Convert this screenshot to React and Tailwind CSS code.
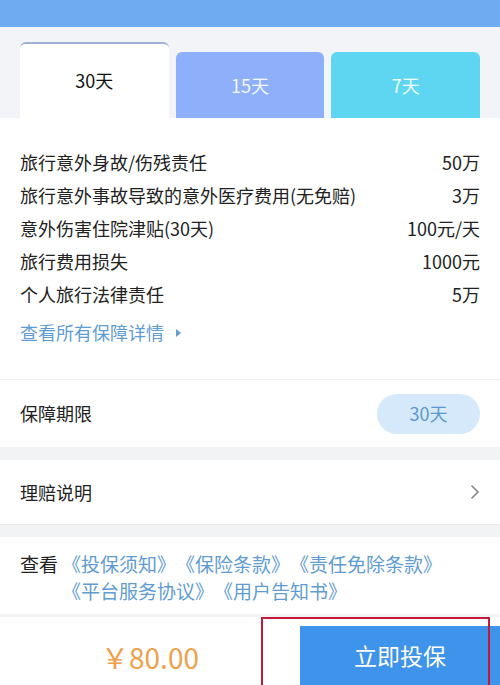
import React from "react";

const coverage = [
  ["旅行意外身故/伤残责任", "50万"],
  ["旅行意外事故导致的意外医疗费用(无免赔)", "3万"],
  ["意外伤害住院津贴(30天)", "100元/天"],
  ["旅行费用损失", "1000元"],
  ["个人旅行法律责任", "5万"],
];

const docs = [
  ["《投保须知》", "《保险条款》", "《责任免除条款》"],
  ["《平台服务协议》", "《用户告知书》"],
];

const font = { fontFamily: '"Noto Sans CJK SC", "Noto Sans", sans-serif' };

export default function App() {
  return (
    <div className="flex h-[685px] w-[500px] flex-col overflow-hidden bg-[#f2f3f5]" style={font}>
      <div className="h-[27px] shrink-0 bg-[#6eabf0]" />

      {/* period tabs */}
      <div className="flex h-[91px] shrink-0 items-end gap-[7px] bg-[#f2f4f7] px-[20px]">
        <div className="flex h-[76px] w-[149px] items-center justify-center rounded-t-[6px] border-t-2 border-[#9db1d9] bg-white pb-[2px] text-[18px] text-[#111]">
          30天
        </div>
        <div className="flex h-[66px] w-[149px] items-center justify-center rounded-t-[6px] bg-[#8eb0fa] text-[18px] text-white/90">
          15天
        </div>
        <div className="flex h-[66px] w-[149px] items-center justify-center rounded-t-[6px] bg-[#5ed6f2] text-[18px] text-white/90">
          7天
        </div>
      </div>

      {/* coverage list */}
      <div className="shrink-0 bg-white px-[20px] pb-[30px] pt-[28px] text-[18px] text-[#222]">
        {coverage.map(([name, amount]) => (
          <div key={name} className="flex h-[33px] items-center justify-between">
            <span>{name}</span>
            <span>{amount}</span>
          </div>
        ))}
        <div className="mt-[5px] flex h-[33px] items-center gap-[12px] text-[#5f9cd3]">
          <span>查看所有保障详情</span>
          <svg width="5" height="8" viewBox="0 0 5 8">
            <path d="M0 0 L5 4 L0 8 Z" fill="#5f9cd3" />
          </svg>
        </div>
      </div>

      <div className="flex h-[68px] shrink-0 items-center justify-between border-t border-[#eeeeee] bg-white px-[20px] text-[18px] text-[#222]">
        <span>保障期限</span>
        <span className="flex h-[40px] w-[103px] items-center justify-center rounded-full bg-[#d6e9fa] text-[#5b98cf]">
          30天
        </span>
      </div>

      <div className="mt-[13px] flex h-[65px] shrink-0 items-center justify-between border-b border-[#e8e8e8] bg-white pl-[20px] pr-[20px] text-[18px] text-[#222]">
        <span>理赔说明</span>
        <svg width="10" height="16" viewBox="0 0 10 16">
          <path d="M1.5 1.5 L8 8 L1.5 14.5" fill="none" stroke="#888" strokeWidth="1.6" />
        </svg>
      </div>

      <div className="mt-[12px] flex h-[77px] shrink-0 bg-white px-[20px] pt-[13px] text-[19px] leading-[27px]">
        <span className="text-[#222]">查看</span>
        <div className="ml-[4px] text-[#5f9cd3]">
          {docs.map((line, i) => (
            <div key={i} className="flex">
              {line.map((d) => (
                <span key={d}>{d}</span>
              ))}
            </div>
          ))}
        </div>
      </div>

      <div className="relative mt-[3px] flex flex-1 bg-white">
        <div className="flex w-[300px] items-center justify-center pt-[12px] text-[28px] text-[#f0a04c]">
          ￥80.00
        </div>
        <div className="mt-[9px] flex flex-1 items-center justify-center bg-[#3e93ea] text-[23px] text-white">
          立即投保
        </div>
        <div className="absolute bottom-0 left-[261px] top-0 w-[229px] border-2 border-b-0 border-[#c4193a]" />
      </div>
    </div>
  );
}
